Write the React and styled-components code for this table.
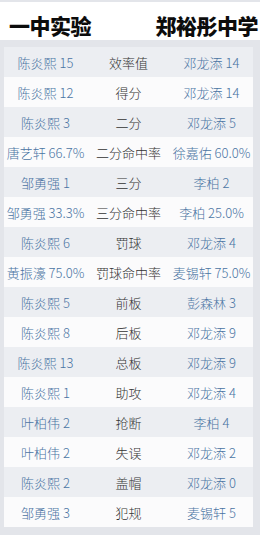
import React from 'react'
import styled, { createGlobalStyle } from 'styled-components'

const rows = [
  ['陈炎熙 15', '效率值', '邓龙添 14'],
  ['陈炎熙 12', '得分', '邓龙添 14'],
  ['陈炎熙 3', '二分', '邓龙添 5'],
  ['唐艺轩 66.7%', '二分命中率', '徐嘉佑 60.0%'],
  ['邹勇强 1', '三分', '李柏 2'],
  ['邹勇强 33.3%', '三分命中率', '李柏 25.0%'],
  ['陈炎熙 6', '罚球', '邓龙添 4'],
  ['黄振濠 75.0%', '罚球命中率', '麦锡轩 75.0%'],
  ['陈炎熙 5', '前板', '彭森林 3'],
  ['陈炎熙 8', '后板', '邓龙添 9'],
  ['陈炎熙 13', '总板', '邓龙添 9'],
  ['陈炎熙 1', '助攻', '邓龙添 4'],
  ['叶柏伟 2', '抢断', '李柏 4'],
  ['叶柏伟 2', '失误', '邓龙添 2'],
  ['陈炎熙 2', '盖帽', '邓龙添 0'],
  ['邹勇强 3', '犯规', '麦锡轩 5'],
]

function App() {
  return (
    <>
      <GlobalStyle />
      <Page>
        <Header>
          <Team>一中实验</Team>
          <Team>郑裕彤中学</Team>
        </Header>
        <Table>
          {rows.map((r, i) => (
            <Row key={i} $odd={i % 2 === 0}>
              <Player>{r[0]}</Player>
              <Stat>{r[1]}</Stat>
              <Player>{r[2]}</Player>
            </Row>
          ))}
        </Table>
      </Page>
    </>
  )
}

export default App

const GlobalStyle = createGlobalStyle`
  html, body {
    margin: 0;
    padding: 0;
    background: #e3e5ea;
  }
`
const Page = styled.div`
  width: 260px;
  height: 535px;
  background: #e3e5ea;
  padding-top: 2px;
  box-sizing: border-box;
  font-family: "Noto Sans CJK SC", "Noto Sans", sans-serif;
`
const Header = styled.div`
  height: 38px;
  background: #ffffff;
  display: flex;
  align-items: flex-end;
  justify-content: space-between;
  padding: 0 2px 4px 9px;
  box-sizing: border-box;
`
const Team = styled.div`
  font-size: 21px;
  font-weight: 900;
  line-height: 22px;
  color: #0c0c0c;
  letter-spacing: -0.5px;
`
const Table = styled.div`
  margin: 7px 7px 0 4px;
  display: flex;
  flex-direction: column;
`
const Row = styled.div`
  height: 30px;
  display: grid;
  grid-template-columns: 1fr 1fr 1fr;
  align-items: center;
  background: ${p => (p.$odd ? '#eceef2' : '#fbfbfc')};
  font-size: 13px;
  font-weight: 300;
`
const Player = styled.div`
  text-align: center;
  color: #4a74a3;
  white-space: nowrap;
`
const Stat = styled.div`
  text-align: center;
  color: #333333;
  white-space: nowrap;
`
